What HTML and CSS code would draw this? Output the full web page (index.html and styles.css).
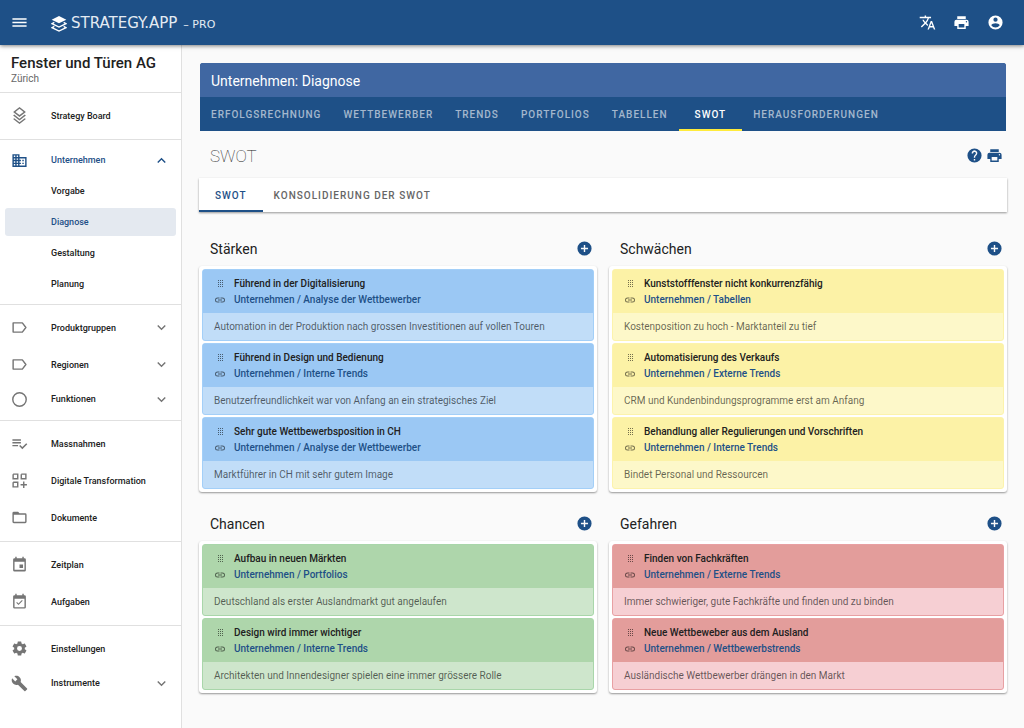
FILE: index.html
```
<!DOCTYPE html>
<html lang="de">
<head>
<meta charset="utf-8">
<meta name="viewport" content="width=device-width, initial-scale=1">
<title>Strategy.App – Unternehmen: Diagnose</title>
<link rel="stylesheet" href="styles.css">
</head>
<body>
<svg class="sprite" aria-hidden="true">
  <symbol id="i-menu" viewBox="0 0 24 24"><path d="M2 6h20v2H2V6m0 5h20v2H2v-2m0 5h20v2H2v-2Z"/></symbol>
  <symbol id="i-logo" viewBox="0 0 24 24"><path d="M12 0 1 5.500l11 5.500 11-5.500L12 0"/><path fill="none" stroke="currentColor" stroke-width="2" d="m5 9.500-3.500 2L12 16.500l10.500-5-3.500-2M5 15.500l-3.500 2L12 22.500l10.500-5-3.500-2"/></symbol>
  <symbol id="i-translate" viewBox="0 0 24 24"><path d="m12.870 15.070-2.540-2.510.030-.030A17.520 17.520 0 0 0 14.070 6H17V4h-7V2H8v2H1v2h11.170C11.500 7.920 10.440 9.750 9 11.350 8.070 10.320 7.300 9.190 6.690 8h-2c.730 1.630 1.730 3.170 2.980 4.560l-5.090 5.020L4 19l5-5 3.110 3.110.760-2.040M18.500 10h-2L12 22h2l1.120-3h4.750L21 22h2l-4.500-12m-2.620 7 1.620-4.330L19.120 17h-3.240Z"/></symbol>
  <symbol id="i-print" viewBox="0 0 24 24"><path d="M18 3H6v4h12V3m1 9a1 1 0 1 1 0-2 1 1 0 0 1 0 2m-3 7H8v-5h8v5m3-11H5a3 3 0 0 0-3 3v6h4v4h12v-4h4v-6a3 3 0 0 0-3-3Z"/></symbol>
  <symbol id="i-account" viewBox="0 0 24 24"><path d="M12 2a10 10 0 1 0 0 20 10 10 0 0 0 0-20m0 3a3 3 0 1 1 0 6 3 3 0 0 1 0-6m0 14.200a7.200 7.200 0 0 1-6-3.220c.030-1.990 4-3.080 6-3.080s5.970 1.090 6 3.080a7.200 7.200 0 0 1-6 3.220Z"/></symbol>
  <symbol id="i-layers" viewBox="0 0 24 24"><path fill-rule="evenodd" d="M12 0 3 7l9 7 9-7-9-7m0 2.530L17.740 7 12 11.470 6.260 7 12 2.530M19.370 10.730 12 16.470l-7.380-5.730L3 12l9 7 9-7-1.630-1.270M19.370 15.730 12 21.470l-7.380-5.730L3 17l9 7 9-7-1.630-1.270Z"/></symbol>
  <symbol id="i-domain" viewBox="0 0 24 24"><path d="M18 15h-2v2h2m0-6h-2v2h2m2 6h-8v-2h2v-2h-2v-2h2v-2h-2V9h8M10 7H8V5h2m0 6H8V9h2m0 6H8v-2h2m0 6H8v-2h2M6 7H4V5h2m0 6H4V9h2m0 6H4v-2h2m0 6H4v-2h2m6-10V3H2v18h20V7H12Z"/></symbol>
  <symbol id="i-label" viewBox="0 0 24 24"><path fill="none" stroke="currentColor" stroke-width="2" stroke-linejoin="round" d="M3 5.500h13l5 6.500-5 6.500H3v-13Z"/></symbol>
  <symbol id="i-circle" viewBox="0 0 24 24"><circle cx="12" cy="12" r="9.500" fill="none" stroke="currentColor" stroke-width="2"/></symbol>
  <symbol id="i-tasks" viewBox="0 0 24 24"><path d="M14 10H2v2h12v-2m0-4H2v2h12V6M2 16h8v-2H2v2m19.500-4.500L23 13l-7 7-4.500-4.500L13 14l3 3 5.500-5.500Z"/></symbol>
  <symbol id="i-grid" viewBox="0 0 24 24"><path fill="none" stroke="currentColor" stroke-width="2" d="M3 3h6.500v6.500H3V3m11.500 0H21v6.500h-6.500V3M3 14.500h6.500V21H3v-6.500m15-1v9M13.500 18h9"/></symbol>
  <symbol id="i-folder" viewBox="0 0 24 24"><path d="M20 18H4V8h16m0-2h-8l-2-2H4a2 2 0 0 0-2 2v12a2 2 0 0 0 2 2h16a2 2 0 0 0 2-2V8a2 2 0 0 0-2-2Z"/></symbol>
  <symbol id="i-event" viewBox="0 0 24 24"><path d="M19 19.500H5V8h14m-3-7v2H8V1H6v2H5a2 2 0 0 0-2 2v15a2 2 0 0 0 2 2h14a2 2 0 0 0 2-2V5a2 2 0 0 0-2-2h-1V1m-1 11h-5v5h5v-5Z"/></symbol>
  <symbol id="i-check" viewBox="0 0 24 24"><path d="M19 20H5V8h14m-3-7v2H8V1H6v2H5a2 2 0 0 0-2 2v15a2 2 0 0 0 2 2h14a2 2 0 0 0 2-2V5a2 2 0 0 0-2-2h-1V1m-1.470 10.060-1.060-1.060-4.880 4.880-2.120-2.120-1.060 1.060L10.590 17l5.940-5.940Z"/></symbol>
  <symbol id="i-cog" viewBox="0 0 24 24"><path d="M12 15.500a3.500 3.500 0 1 1 0-7 3.500 3.500 0 0 1 0 7m7.430-2.530a7.770 7.770 0 0 0 0-1.940l2.110-1.630c.190-.150.240-.420.120-.640l-2-3.460c-.120-.220-.390-.310-.610-.220l-2.490 1c-.520-.390-1.060-.730-1.690-.980l-.370-2.650A.506.506 0 0 0 14 2h-4c-.250 0-.460.180-.500.420l-.370 2.650c-.630.250-1.170.590-1.690.980l-2.490-1c-.220-.090-.490 0-.610.220l-2 3.460c-.130.220-.070.490.120.640L4.570 11a7.900 7.900 0 0 0 0 1.940l-2.110 1.690c-.190.150-.250.420-.120.640l2 3.460c.120.220.390.300.610.220l2.490-1.010c.520.400 1.060.740 1.690.990l.370 2.650c.040.240.250.420.500.420h4c.250 0 .460-.180.500-.420l.370-2.650c.630-.260 1.170-.590 1.690-.990l2.490 1.010c.220.080.490 0 .610-.220l2-3.460c.120-.220.070-.490-.120-.640l-2.110-1.660Z"/></symbol>
  <symbol id="i-wrench" viewBox="0 0 24 24"><path d="m22.700 19-9.100-9.100c.900-2.300.400-5-1.500-6.900-2-2-5-2.400-7.400-1.300L9 6 6 9 1.600 4.700C.400 7.100.900 10.100 2.900 12.100c1.900 1.900 4.600 2.400 6.900 1.500l9.100 9.100c.400.400 1 .400 1.400 0l2.300-2.300c.500-.400.500-1.100.100-1.400Z"/></symbol>
  <symbol id="i-down" viewBox="0 0 24 24"><path d="M7.410 8.580 12 13.170l4.590-4.590L18 10l-6 6-6-6 1.410-1.420Z"/></symbol>
  <symbol id="i-up" viewBox="0 0 24 24"><path d="M7.410 15.410 12 10.830l4.590 4.580L18 14l-6-6-6 6 1.410 1.410Z"/></symbol>
  <symbol id="i-help" viewBox="0 0 24 24"><path d="m15.070 11.250-.900.920C13.450 12.890 13 13.500 13 15h-2v-.500c0-1.110.450-2.110 1.170-2.830l1.240-1.260A2 2 0 1 0 10 9H8a4 4 0 1 1 7.070 2.250M13 19h-2v-2h2M12 2a10 10 0 1 0 0 20 10 10 0 0 0 0-20Z"/></symbol>
  <symbol id="i-plus" viewBox="0 0 24 24"><path d="M17 13h-4v4h-2v-4H7v-2h4V7h2v4h4m-5-9a10 10 0 1 0 0 20 10 10 0 0 0 0-20Z"/></symbol>
  <symbol id="i-drag" viewBox="0 0 12 12"><path d="M4 2h1v1H4zM6 2h1v1H6zM8 2h1v1H8zM4 4h1v1H4zM6 4h1v1H6zM8 4h1v1H8zM4 6h1v1H4zM6 6h1v1H6zM8 6h1v1H8zM4 8h1v1H4zM6 8h1v1H6zM8 8h1v1H8z"/></symbol>
  <symbol id="i-link" viewBox="0 0 24 24"><path d="M3.900 12A3.100 3.100 0 0 1 7 8.900h4V7H7a5 5 0 0 0 0 10h4v-1.900H7A3.100 3.100 0 0 1 3.900 12M8 13h8v-2H8v2m9-6h-4v1.900h4a3.100 3.100 0 0 1 0 6.200h-4V17h4a5 5 0 0 0 0-10Z"/></symbol>
</svg>

<header class="appbar">
  <button class="icon-btn menu-btn" type="button" aria-label="Menü"><svg class="icon"><use href="#i-menu"/></svg></button>
  <a class="brand" href="#"><svg class="icon brand-icon"><use href="#i-logo"/></svg><span class="brand-name">STRATEGY.APP</span><span class="brand-plan">– PRO</span></a>
  <div class="appbar-actions">
    <button class="icon-btn" type="button" aria-label="Sprache"><svg class="icon"><use href="#i-translate"/></svg></button>
    <button class="icon-btn" type="button" aria-label="Drucken"><svg class="icon"><use href="#i-print"/></svg></button>
    <button class="icon-btn" type="button" aria-label="Konto"><svg class="icon"><use href="#i-account"/></svg></button>
  </div>
</header>

<div class="shell">
  <aside class="sidebar">
    <div class="company">
      <div class="company-name">Fenster und Türen AG</div>
      <div class="company-place">Zürich</div>
    </div>
    <nav>
      <div class="nav-section">
        <a class="nav-item" href="#"><svg class="icon"><use href="#i-layers"/></svg><span>Strategy Board</span></a>
      </div>
      <div class="nav-section">
        <button class="nav-item compact open" type="button" aria-expanded="true"><svg class="icon"><use href="#i-domain"/></svg><span>Unternehmen</span><svg class="icon chevron"><use href="#i-up"/></svg></button>
        <div class="nav-sub">
          <a class="sub-item" href="#">Vorgabe</a>
          <a class="sub-item current" href="#" aria-current="page">Diagnose</a>
          <a class="sub-item" href="#">Gestaltung</a>
          <a class="sub-item" href="#">Planung</a>
        </div>
      </div>
      <div class="nav-section">
        <button class="nav-item" type="button"><svg class="icon"><use href="#i-label"/></svg><span>Produktgruppen</span><svg class="icon chevron"><use href="#i-down"/></svg></button>
        <button class="nav-item" type="button"><svg class="icon"><use href="#i-label"/></svg><span>Regionen</span><svg class="icon chevron"><use href="#i-down"/></svg></button>
        <button class="nav-item compact" type="button"><svg class="icon"><use href="#i-circle"/></svg><span>Funktionen</span><svg class="icon chevron"><use href="#i-down"/></svg></button>
      </div>
      <div class="nav-section">
        <a class="nav-item" href="#"><svg class="icon"><use href="#i-tasks"/></svg><span>Massnahmen</span></a>
        <a class="nav-item" href="#"><svg class="icon"><use href="#i-grid"/></svg><span>Digitale Transformation</span></a>
        <a class="nav-item" href="#"><svg class="icon"><use href="#i-folder"/></svg><span>Dokumente</span></a>
      </div>
      <div class="nav-section">
        <a class="nav-item" href="#"><svg class="icon"><use href="#i-event"/></svg><span>Zeitplan</span></a>
        <a class="nav-item" href="#"><svg class="icon"><use href="#i-check"/></svg><span>Aufgaben</span></a>
      </div>
      <div class="nav-section">
        <a class="nav-item" href="#"><svg class="icon"><use href="#i-cog"/></svg><span>Einstellungen</span></a>
        <button class="nav-item compact" type="button"><svg class="icon"><use href="#i-wrench"/></svg><span>Instrumente</span><svg class="icon chevron"><use href="#i-down"/></svg></button>
      </div>
    </nav>
  </aside>

  <main class="content">
    <section class="page-head">
      <h1 class="page-title">Unternehmen: Diagnose</h1>
      <nav class="main-tabs">
        <a class="tab" href="#">ERFOLGSRECHNUNG</a>
        <a class="tab" href="#">WETTBEWERBER</a>
        <a class="tab" href="#">TRENDS</a>
        <a class="tab" href="#">PORTFOLIOS</a>
        <a class="tab" href="#">TABELLEN</a>
        <a class="tab active" href="#" aria-current="page">SWOT</a>
        <a class="tab" href="#">HERAUSFORDERUNGEN</a>
      </nav>
    </section>

    <div class="section-head">
      <h2 class="section-title">SWOT</h2>
      <div class="section-actions">
        <button class="icon-btn" type="button" aria-label="Hilfe"><svg class="icon"><use href="#i-help"/></svg></button>
        <button class="icon-btn" type="button" aria-label="Drucken"><svg class="icon"><use href="#i-print"/></svg></button>
      </div>
    </div>

    <nav class="view-tabs">
      <a class="view-tab active" href="#" aria-current="page">SWOT</a>
      <a class="view-tab" href="#">KONSOLIDIERUNG DER SWOT</a>
    </nav>

    <div class="swot">
      <section class="quadrant blue">
        <div class="quadrant-head"><h3>Stärken</h3><button class="icon-btn" type="button" aria-label="Stärke hinzufügen"><svg class="icon"><use href="#i-plus"/></svg></button></div>
        <div class="cards">
          <article class="card"><div class="card-head"><svg class="icon small"><use href="#i-drag"/></svg><h4>Führend in der Digitalisierung</h4><svg class="icon small"><use href="#i-link"/></svg><a href="#">Unternehmen / Analyse der Wettbewerber</a></div><p>Automation in der Produktion nach grossen Investitionen auf vollen Touren</p></article>
          <article class="card"><div class="card-head"><svg class="icon small"><use href="#i-drag"/></svg><h4>Führend in Design und Bedienung</h4><svg class="icon small"><use href="#i-link"/></svg><a href="#">Unternehmen / Interne Trends</a></div><p>Benutzerfreundlichkeit war von Anfang an ein strategisches Ziel</p></article>
          <article class="card"><div class="card-head"><svg class="icon small"><use href="#i-drag"/></svg><h4>Sehr gute Wettbewerbsposition in CH</h4><svg class="icon small"><use href="#i-link"/></svg><a href="#">Unternehmen / Analyse der Wettbewerber</a></div><p>Marktführer in CH mit sehr gutem Image</p></article>
        </div>
      </section>
      <section class="quadrant yellow">
        <div class="quadrant-head"><h3>Schwächen</h3><button class="icon-btn" type="button" aria-label="Schwäche hinzufügen"><svg class="icon"><use href="#i-plus"/></svg></button></div>
        <div class="cards">
          <article class="card"><div class="card-head"><svg class="icon small"><use href="#i-drag"/></svg><h4>Kunststofffenster nicht konkurrenzfähig</h4><svg class="icon small"><use href="#i-link"/></svg><a href="#">Unternehmen / Tabellen</a></div><p>Kostenposition zu hoch - Marktanteil zu tief</p></article>
          <article class="card"><div class="card-head"><svg class="icon small"><use href="#i-drag"/></svg><h4>Automatisierung des Verkaufs</h4><svg class="icon small"><use href="#i-link"/></svg><a href="#">Unternehmen / Externe Trends</a></div><p>CRM und Kundenbindungsprogramme erst am Anfang</p></article>
          <article class="card"><div class="card-head"><svg class="icon small"><use href="#i-drag"/></svg><h4>Behandlung aller Regulierungen und Vorschriften</h4><svg class="icon small"><use href="#i-link"/></svg><a href="#">Unternehmen / Interne Trends</a></div><p>Bindet Personal und Ressourcen</p></article>
        </div>
      </section>
      <section class="quadrant green">
        <div class="quadrant-head"><h3>Chancen</h3><button class="icon-btn" type="button" aria-label="Chance hinzufügen"><svg class="icon"><use href="#i-plus"/></svg></button></div>
        <div class="cards">
          <article class="card"><div class="card-head"><svg class="icon small"><use href="#i-drag"/></svg><h4>Aufbau in neuen Märkten</h4><svg class="icon small"><use href="#i-link"/></svg><a href="#">Unternehmen / Portfolios</a></div><p>Deutschland als erster Auslandmarkt gut angelaufen</p></article>
          <article class="card"><div class="card-head"><svg class="icon small"><use href="#i-drag"/></svg><h4>Design wird immer wichtiger</h4><svg class="icon small"><use href="#i-link"/></svg><a href="#">Unternehmen / Interne Trends</a></div><p>Architekten und Innendesigner spielen eine immer grössere Rolle</p></article>
        </div>
      </section>
      <section class="quadrant red">
        <div class="quadrant-head"><h3>Gefahren</h3><button class="icon-btn" type="button" aria-label="Gefahr hinzufügen"><svg class="icon"><use href="#i-plus"/></svg></button></div>
        <div class="cards">
          <article class="card"><div class="card-head"><svg class="icon small"><use href="#i-drag"/></svg><h4>Finden von Fachkräften</h4><svg class="icon small"><use href="#i-link"/></svg><a href="#">Unternehmen / Externe Trends</a></div><p>Immer schwieriger, gute Fachkräfte und finden und zu binden</p></article>
          <article class="card"><div class="card-head"><svg class="icon small"><use href="#i-drag"/></svg><h4>Neue Wettbeweber aus dem Ausland</h4><svg class="icon small"><use href="#i-link"/></svg><a href="#">Unternehmen / Wettbewerbstrends</a></div><p>Ausländische Wettbewerber drängen in den Markt</p></article>
        </div>
      </section>
    </div>
  </main>
</div>
</body>
</html>
```
FILE: styles.css
```
:root {
  --primary: #1e5087;
  --text: #212121;
  --muted: #757575;
}

* { box-sizing: border-box; }

body {
  margin: 0;
  min-height: 100vh;
  display: flex;
  flex-direction: column;
  background: #fafafa;
  color: var(--text);
  font-family: Roboto, "Liberation Sans", sans-serif;
  font-size: 10px;
  line-height: 16px;
}

h1, h2, h3, h4, p { margin: 0; }
a { color: inherit; text-decoration: none; }

button {
  padding: 0;
  border: 0;
  background: none;
  color: inherit;
  font: inherit;
  cursor: pointer;
}

.sprite { display: none; }

.icon {
  display: block;
  flex: none;
  width: 17px;
  height: 17px;
  fill: currentColor;
}

.icon.small {
  width: 12px;
  height: 12px;
  color: rgba(0, 0, 0, 0.54);
}

/* Top bar */
.appbar {
  z-index: 1;
  display: flex;
  align-items: center;
  height: 45px;
  padding: 0 20px 0 11px;
  background: var(--primary);
  color: #fff;
  box-shadow: 0 1px 4px rgba(0, 0, 0, 0.5);
}

.brand {
  display: flex;
  align-items: baseline;
  margin-left: 23px;
  padding-top: 2px;
  color: #e4ebf3;
  font-family: "DejaVu Sans", sans-serif;
}

.brand-icon { align-self: center; width: 16px; height: 16px; color: #fff; }
.brand-name { margin-left: 4px; font-size: 15px; }
.brand-plan { margin-left: 6px; font-size: 11px; }

.appbar-actions {
  display: flex;
  gap: 17px;
  margin-left: auto;
}

/* Layout */
.shell {
  flex: 1;
  display: flex;
}

.sidebar {
  flex: none;
  width: 182px;
  border-right: 1px solid #e0e0e0;
  background: #fff;
}

.content {
  flex: 1;
  min-width: 0;
  padding: 18px 17px;
}

/* Sidebar */
.company { padding: 9px 11px 7px; }
.company-name { font-size: 15px; font-weight: 500; line-height: 18px; }
.company-place { color: #666; line-height: 13px; }

.nav-section {
  padding: 4px 0 5px;
  border-top: 1px solid #e0e0e0;
}

.nav-item {
  display: flex;
  align-items: center;
  width: 100%;
  height: 37px;
  padding: 0 11px;
  font-size: 9px;
  font-weight: 500;
  text-align: left;
}

.nav-item .icon { color: var(--muted); }
.nav-item span { margin-left: 23px; }
.nav-item.compact { height: 32px; }
.nav-item .chevron { margin-left: auto; }
.nav-item.open, .nav-item.open .icon { color: var(--primary); }

.nav-sub {
  display: grid;
  gap: 3px;
  padding: 1px 5px;
}

.sub-item {
  padding: 6px 46px;
  border-radius: 3px;
  font-size: 9px;
  font-weight: 500;
}

.sub-item.current { background: #e4e9f0; color: var(--primary); }

/* Page header */
.page-head {
  margin: 0 1px;
  border-radius: 3px 3px 0 0;
  overflow: hidden;
  background: var(--primary);
}

.page-title {
  padding: 9px 11px 7px;
  background: #4067a2;
  color: #fff;
  font-size: 14px;
  font-weight: 400;
  line-height: 18px;
}

.main-tabs { display: flex; }

.tab, .view-tab {
  padding: 11px 11px 7px;
  border-bottom: 2px solid transparent;
  font-weight: 500;
  letter-spacing: 1px;
  line-height: 14px;
}

.tab { color: rgba(255, 255, 255, 0.6); }
.tab.active, .view-tab.active { padding-left: 16px; padding-right: 16px; }
.tab.active { border-color: #ffeb3b; color: #fff; }

.section-head {
  display: flex;
  align-items: center;
  justify-content: space-between;
  height: 47px;
  padding: 2px 4px 0 11px;
}

.section-title {
  font-size: 17px;
  font-weight: 100;
}

.section-actions { display: flex; gap: 3px; color: var(--primary); }

.view-tabs {
  display: flex;
  background: #fff;
  box-shadow: 0 1px 2px rgba(0, 0, 0, 0.4);
}

.view-tab { color: #666; }
.view-tab.active { border-color: var(--primary); color: var(--primary); }

/* SWOT board */
.swot {
  display: grid;
  grid-template-columns: 1fr 1fr;
  gap: 12px;
  padding-top: 17px;
}

.quadrant-head {
  display: flex;
  align-items: center;
  justify-content: space-between;
  height: 37px;
  padding: 2px 4px 0 11px;
  color: var(--primary);
}

.quadrant-head h3 {
  color: var(--text);
  font-size: 14px;
  font-weight: 400;
}

.cards {
  display: grid;
  gap: 2px;
  padding: 3px;
  border-radius: 3px;
  background: #fff;
  box-shadow: 0 1px 2px rgba(0, 0, 0, 0.4);
}

.card {
  border: 1px solid var(--edge);
  border-radius: 3px;
  background: var(--body);
}

.card-head {
  display: grid;
  grid-template-columns: 12px 1fr;
  column-gap: 8px;
  align-items: center;
  padding: 6px 11px 5px;
  background: var(--head);
}

.card h4, .card-head a { font-size: 10px; font-weight: 500; }
.card-head a { color: var(--primary); }

.card p {
  padding: 6px 11px 5px;
  color: rgba(0, 0, 0, 0.6);
}

.blue { --head: #9bc8f4; --body: #c1ddf8; --edge: #a3cff8; }
.yellow { --head: #fcf2a6; --body: #fdf8c9; --edge: #fcf3ac; }
.green { --head: #aed6ab; --body: #cee6cc; --edge: #a9d6aa; }
.red { --head: #e39d9b; --body: #f6cfd3; --edge: #e8a0a3; }
```
